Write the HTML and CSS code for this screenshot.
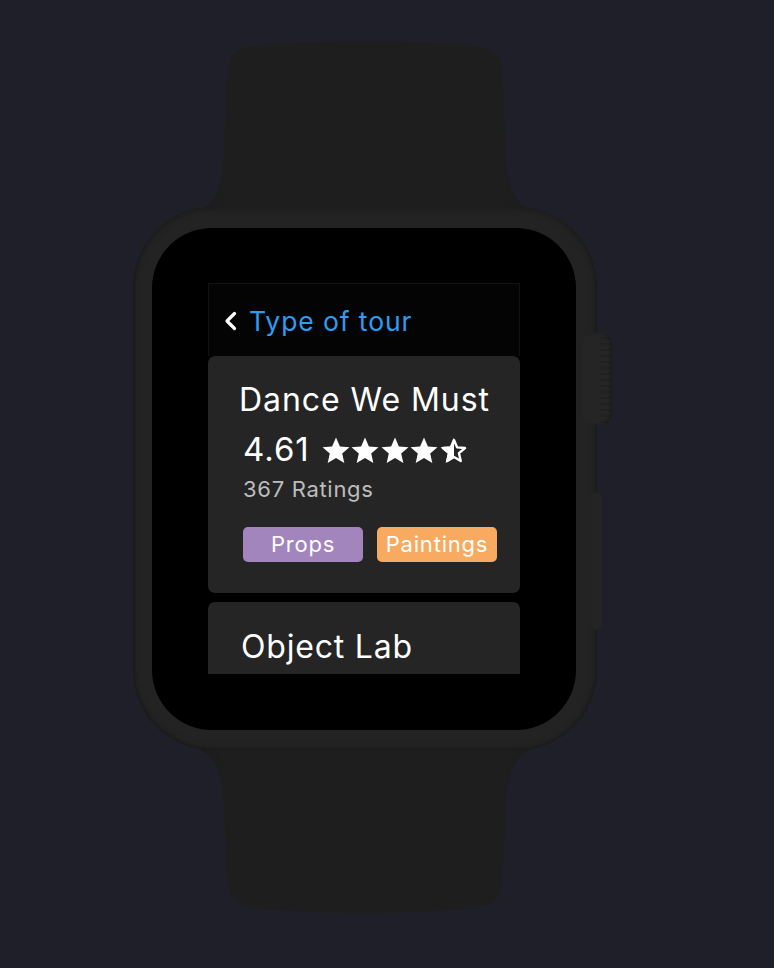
FILE: index.html
```html
<!DOCTYPE html>
<html lang="en">
<head>
<meta charset="utf-8">
<title>Type of tour</title>
<link rel="stylesheet" href="styles.css">
</head>
<body>
<div class="stage">
  <div class="watch">
    <svg class="band band-top" width="464" height="175" viewBox="0 0 464 175">
      <defs>
        <linearGradient id="bg1" x1="0" x2="1" y1="0" y2="0">
          <stop offset="0" stop-color="#1a1a1a"/>
          <stop offset="0.1" stop-color="#1e1e1e"/>
          <stop offset="0.9" stop-color="#1e1e1e"/>
          <stop offset="1" stop-color="#1a1a1a"/>
        </linearGradient>
      </defs>
      <path d="M58,175 C80,168 88,150 90,125 L95,28 C96,12 104,8 130,5 Q232,-3 334,5 C360,8 368,12 369,28 L374,125 C376,150 384,168 406,175 Z" fill="url(#bg1)"/>
    </svg>
    <div class="body-row">
      <div class="case">
        <div class="screen">
          <div class="viewport">
            <div class="nav">
              <svg class="chev" width="13" height="20" viewBox="0 0 13 20"><path d="M10.5,2.5 L3,10 L10.5,17.5" fill="none" stroke="#fff" stroke-width="3.2" stroke-linecap="round" stroke-linejoin="round"/></svg>
              <span class="nav-title">Type of tour</span>
            </div>
            <div class="card">
              <div class="card-title">Dance We Must</div>
              <div class="rating-row">
                <span class="score">4.61</span>
                <span class="stars">
                  <svg width="28" height="27" viewBox="1.6 1.4 20.8 20"><path class="star" d="M12,1.8 L14.9,8.4 L22,9 L16.6,13.7 L18.2,20.7 L12,17 L5.8,20.7 L7.4,13.7 L2,9 L9.1,8.4 Z"/></svg>
                  <svg width="28" height="27" viewBox="1.6 1.4 20.8 20"><path class="star" d="M12,1.8 L14.9,8.4 L22,9 L16.6,13.7 L18.2,20.7 L12,17 L5.8,20.7 L7.4,13.7 L2,9 L9.1,8.4 Z"/></svg>
                  <svg width="28" height="27" viewBox="1.6 1.4 20.8 20"><path class="star" d="M12,1.8 L14.9,8.4 L22,9 L16.6,13.7 L18.2,20.7 L12,17 L5.8,20.7 L7.4,13.7 L2,9 L9.1,8.4 Z"/></svg>
                  <svg width="28" height="27" viewBox="1.6 1.4 20.8 20"><path class="star" d="M12,1.8 L14.9,8.4 L22,9 L16.6,13.7 L18.2,20.7 L12,17 L5.8,20.7 L7.4,13.7 L2,9 L9.1,8.4 Z"/></svg>
                  <svg width="28" height="27" viewBox="1.6 1.4 20.8 20"><path class="star-outline" d="M12,3.6 L14.3,9.1 L20.2,9.6 L15.7,13.4 L17,19.2 L12,16.2 L7,19.2 L8.3,13.4 L3.8,9.6 L9.7,9.1 Z"/><path class="star" d="M12,1.8 L12,17 L5.8,20.7 L7.4,13.7 L2,9 L9.1,8.4 Z"/></svg>
                </span>
              </div>
              <div class="ratings">367 Ratings</div>
              <div class="tags">
                <span class="tag tag-props">Props</span>
                <span class="tag tag-paint">Paintings</span>
              </div>
            </div>
            <div class="card card-2">
              <div class="card-title title-2">Object Lab</div>
            </div>
          </div>
        </div>
      </div>
      <div class="side">
        <div class="crown"></div>
        <div class="button"></div>
      </div>
    </div>
    <svg class="band band-bottom" width="464" height="172" viewBox="0 0 464 172">
      <defs>
        <linearGradient id="bg2" x1="0" x2="1" y1="0" y2="0">
          <stop offset="0" stop-color="#1a1a1a"/>
          <stop offset="0.1" stop-color="#1e1e1e"/>
          <stop offset="0.9" stop-color="#1e1e1e"/>
          <stop offset="1" stop-color="#1a1a1a"/>
        </linearGradient>
      </defs>
      <path d="M58,0 C80,8 88,24 90,50 L95,140 C96,156 104,160 130,164 Q232,172 334,164 C360,160 368,156 369,140 L374,50 C376,24 384,8 406,0 Z" fill="url(#bg2)"/>
    </svg>
  </div>
</div>
</body>
</html>
```
FILE: styles.css
```css
* { box-sizing: border-box; }
html, body {
  margin: 0;
  padding: 0;
  background: #1e1f29;
}
body {
  width: 774px;
  height: 968px;
  overflow: hidden;
  font-family: Inter, "Noto Sans", sans-serif;
}
.stage {
  padding-top: 40px;
  padding-left: 133px;
}
.watch {
  display: flex;
  flex-direction: column;
  width: 480px;
}
.band { display: block; }
.band-top { margin-bottom: -8px; }
.band-bottom { margin-top: -5px; }
.body-row {
  display: flex;
  position: relative;
  z-index: 1;
}
.case {
  width: 464px;
  height: 543px;
  border-radius: 80px;
  background: #232323;
  box-shadow: inset 0 0 6px rgba(0,0,0,0.5), inset 0 2px 2px rgba(255,255,255,0.02);
  padding: 21px 21px 20px 19px;
  position: relative;
  z-index: 2;
}
.screen {
  width: 424px;
  height: 502px;
  background: #000;
  border-radius: 60px;
  padding: 55px 56px 0 56px;
}
.viewport {
  width: 312px;
  height: 391px;
  overflow: hidden;
  display: flex;
  flex-direction: column;
}
.nav {
  flex: none;
  height: 73px;
  border: 1px solid #121212;
  border-bottom: none;
  background: #040404;
  display: flex;
  align-items: center;
  padding-left: 15px;
  padding-top: 2px;
}
.chev { display: block; margin-right: 12px; }
.nav-title {
  color: #2e9cf1;
  font-size: 26.5px;
  letter-spacing: 0.9px;
}
.card {
  flex: none;
  background: #252525;
  border-radius: 7px;
  padding: 24px 0 31px 31px;
  color: #fff;
}
.card-2 {
  margin-top: 9px;
  height: 80px;
  padding-top: 25px;
  border-radius: 7px 7px 0 0;
}
.card-title {
  font-size: 32px;
  line-height: 40px;
  letter-spacing: 0.95px;
}
.title-2 { padding-left: 2px; letter-spacing: 0.8px; }
.rating-row {
  display: flex;
  align-items: center;
  padding-left: 4px;
  margin-top: 11px;
  height: 36px;
}
.score {
  font-size: 33px;
  line-height: 36px;
  letter-spacing: 1px;
  margin-right: 12px;
}
.stars { display: flex; gap: 1.5px; margin-top: 2px; }
.stars svg { display: block; }
.star { fill: #fff; }
.star-outline { fill: none; stroke: #fff; stroke-width: 1.8; stroke-linejoin: round; }
.ratings {
  padding-left: 4px;
  font-size: 22px;
  line-height: 26px;
  color: #bdbdbd;
  letter-spacing: 0.7px;
  margin-top: 9px;
}
.tags {
  display: flex;
  gap: 14px;
  padding-left: 4px;
  margin-top: 25px;
}
.tag {
  width: 120px;
  height: 35px;
  border-radius: 5px;
  display: flex;
  align-items: center;
  justify-content: center;
  font-size: 22px;
  letter-spacing: 0.8px;
  color: #fff;
  padding-bottom: 1px;
}
.tag-props { background: #a385be; }
.tag-paint { background: #f8aa60; }
.side {
  display: flex;
  flex-direction: column;
  margin-left: -15px;
  position: relative;
  z-index: 3;
}
.crown {
  width: 30px;
  height: 92px;
  margin-top: 126px;
  border-radius: 11px;
  background:
    repeating-linear-gradient(180deg, rgba(0,0,0,0) 0 4px, rgba(0,0,0,0.12) 4px 6px) right / 12px 100% no-repeat,
    #252525;
  box-shadow: inset -2px 0 3px rgba(0,0,0,0.25);
}
.button {
  width: 11px;
  height: 137px;
  margin-top: 68px;
  margin-left: 9px;
  border-radius: 5px;
  background: #242424;
}
```
